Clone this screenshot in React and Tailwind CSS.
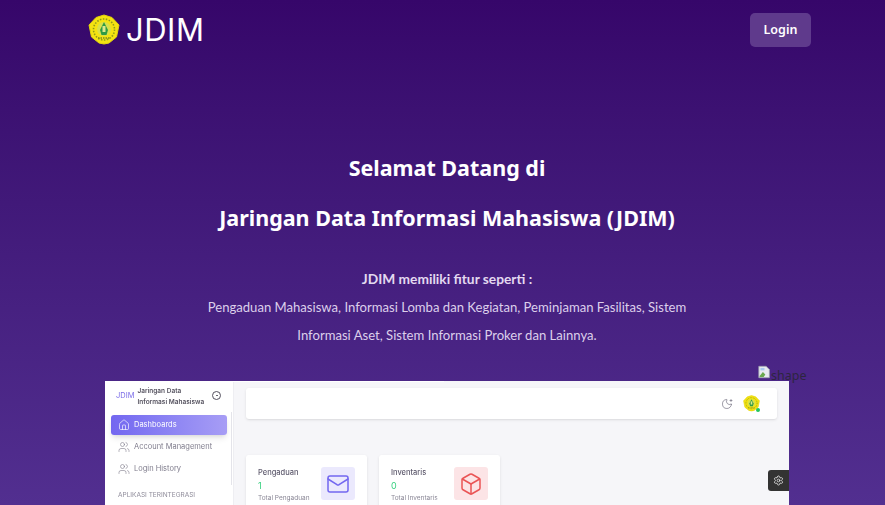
import React from 'react';
import { Mail, Box, Users, Home, Settings, MoonStar } from 'lucide-react';

const Logo = ({ className }) => (
  <svg viewBox="0 0 32 32" className={className}>
    <path d="M16 1 L24 3.5 L31 11 L28.5 23 L21 29 Q16 31 11 29 L3.5 23 L1 11 L8 3.5 Z" fill="#f4e311" stroke="#e3d40c" />
    <circle cx="16" cy="15.5" r="10.5" fill="none" stroke="#8f9a1c" strokeWidth="1.6" strokeDasharray="1.5 1.5" />
    <circle cx="16" cy="15" r="7" fill="#d9e04a" />
    <path d="M16 8 L20 16 L18.5 21 L13.5 21 L12 16 Z" fill="#2f9a45" />
    <path d="M14.5 12 H17.5 V18 H14.5 Z" fill="#dbe88c" />
    <path d="M10 24 H22" stroke="#7c8a20" strokeWidth="1.5" strokeDasharray="1.5 1" />
  </svg>
);

const StatCard = ({ title, value, label, tint, children }) => (
  <div className="w-[121px] h-[70px] bg-white rounded-[3px] pl-3 pr-[12px] pt-3 flex justify-between shadow-sm">
    <div>
      <div className="text-[7.5px] leading-[11px] font-medium text-[#5f5b6e]">{title}</div>
      <div className="text-[9px] leading-[11px] mt-[2px] text-[#35d07f]">{value}</div>
      <div className="text-[6.5px] leading-[10px] mt-[2px] text-[#8a8796] whitespace-nowrap">{label}</div>
    </div>
    <div className={`w-[34px] h-[33px] rounded-[3px] flex items-center justify-center ${tint}`}>{children}</div>
  </div>
);

const App = () => {
  return (
    <div className="relative h-[505px] overflow-hidden bg-gradient-to-b from-[#36066a] to-[#522f90] font-['Noto_Sans',sans-serif]">
      <header className="flex items-start justify-between pl-[88px] pr-[74px]">
        <div className="flex items-center gap-[6px] pt-[13px]">
          <Logo className="w-8 h-8" />
          <span className="font-['Inter',sans-serif] text-[31px] leading-[34px] tracking-[0.5px] text-white">JDIM</span>
        </div>
        <button className="mt-[13px] w-[61px] h-[34px] rounded-[5px] bg-[#5f3a8c] text-white text-[12.5px] font-semibold">Login</button>
      </header>

      <main className="flex flex-col items-center pl-[9px]">
        <h1 className="mt-[106px] text-[21.5px] leading-[30px] font-bold text-white">Selamat Datang di</h1>
        <h2 className="mt-[20px] text-[21.5px] leading-[30px] font-bold text-white">Jaringan Data Informasi Mahasiswa (JDIM)</h2>
        <p className="mt-[32px] font-['Lato',sans-serif] text-[13.75px] leading-[28px] font-bold text-[#e3d9f0]">JDIM memiliki fitur seperti :</p>
        <p className="w-[500px] text-center font-['Lato',sans-serif] text-[13.1px] leading-[28px] text-[#dccfeb]">
          Pengaduan Mahasiswa, Informasi Lomba dan Kegiatan, Peminjaman Fasilitas, Sistem Informasi Aset, Sistem Informasi Proker dan Lainnya.
        </p>

        {/* dashboard preview */}
        <div className="mt-[32px] w-[684px] h-[124px] flex bg-[#f6f6f9] font-['Inter',sans-serif] relative">
          <aside className="relative w-[129px] bg-white shrink-0 px-[6px] border-r border-[#eeeef2] blur-[0.25px]">
            <div className="flex items-start pl-[5px] pt-[5px] h-[34px]">
              <span className="text-[7.5px] leading-[20px] text-[#7d6fe8] mr-[3px]">JDIM</span>
              <span className="text-[6.5px] leading-[11px] font-semibold text-[#55525f] w-[75px] whitespace-nowrap">
                Jaringan Data<br />Informasi Mahasiswa
              </span>
              <span className="mt-[5px] w-[9px] h-[9px] rounded-full border border-[#55525f] flex items-center justify-center">
                <span className="w-[1.5px] h-[1.5px] rounded-full bg-[#55525f]" />
              </span>
            </div>
            <div className="h-[20px] w-[116px] rounded-[3px] bg-gradient-to-r from-[#7367f0] to-[#a79df5] flex items-center pl-[7px] gap-[4px] text-white text-[7.5px] shadow-md">
              <Home className="w-[12px] h-[12px]" strokeWidth={1.3} />
              Dashboards
            </div>
            <div className="h-[22px] mt-[1px] flex items-center pl-[7px] gap-[4px] text-[7.5px] text-[#7f7c8c]">
              <Users className="w-[12px] h-[12px]" strokeWidth={1.2} />
              Account Management
            </div>
            <div className="h-[22px] flex items-center pl-[7px] gap-[4px] text-[7.5px] text-[#7f7c8c]">
              <Users className="w-[12px] h-[12px]" strokeWidth={1.2} />
              Login History
            </div>
            <div className="mt-[11px] pl-[7px] text-[6.5px] text-[#8f8c9a]">APLIKASI TERINTEGRASI</div>
            <span className="absolute right-[1px] top-[31px] h-[73px] w-[1px] bg-[#e4e4ea]" />
          </aside>
          <div className="flex-1 pl-[12px] pr-[12px] pt-[7px] blur-[0.25px]">
            <div className="h-[31px] bg-white rounded-[3px] shadow-sm flex items-center justify-end gap-[10px] pr-[17px]">
              <MoonStar className="w-[12px] h-[12px] text-[#6b6878]" strokeWidth={1.3} />
              <div className="relative">
                <Logo className="w-[17px] h-[17px]" />
                <span className="absolute right-0 bottom-0 w-[4px] h-[4px] rounded-full bg-[#22c55e]" />
              </div>
            </div>
            <div className="mt-[36px] flex gap-[12px]">
              <StatCard title="Pengaduan" value="1" label="Total Pengaduan" tint="bg-[#ebe9fd]">
                <Mail className="w-[24px] h-[24px] text-[#7367f0]" strokeWidth={1.5} />
              </StatCard>
              <StatCard title="Inventaris" value="0" label="Total Inventaris" tint="bg-[#fce4e6]">
                <Box className="w-[24px] h-[24px] text-[#ea5455]" strokeWidth={1.5} />
              </StatCard>
            </div>
          </div>
          <button className="absolute right-0 top-[89px] w-[21px] h-[21px] rounded-l-[3px] bg-[#333333] flex items-center justify-center text-white">
            <Settings className="w-[11px] h-[11px]" strokeWidth={1.5} />
          </button>
          <span className="absolute left-0 top-0 w-[339px] h-[1px] bg-white" />
        </div>
      </main>

      {/* broken image placeholder */}
      <div className="absolute left-[758px] top-[367px] flex items-start text-[#2d2540] text-[12.5px] leading-[18px]">
        <svg viewBox="0 0 16 16" className="w-[13px] h-[14px] mt-[-2px]">
          <path d="M1 1 H10 L14 5 V15 H1 Z" fill="#e8eaf0" stroke="#9aa0ad" strokeWidth="1" />
          <path d="M2 13 L6 8 L9 11 L7 14 H2 Z" fill="#6aa84f" />
          <path d="M3 3 H8 V6 H3 Z" fill="#a9c8f0" />
        </svg>
        <span>shape</span>
      </div>
    </div>
  );
};

export default App;
